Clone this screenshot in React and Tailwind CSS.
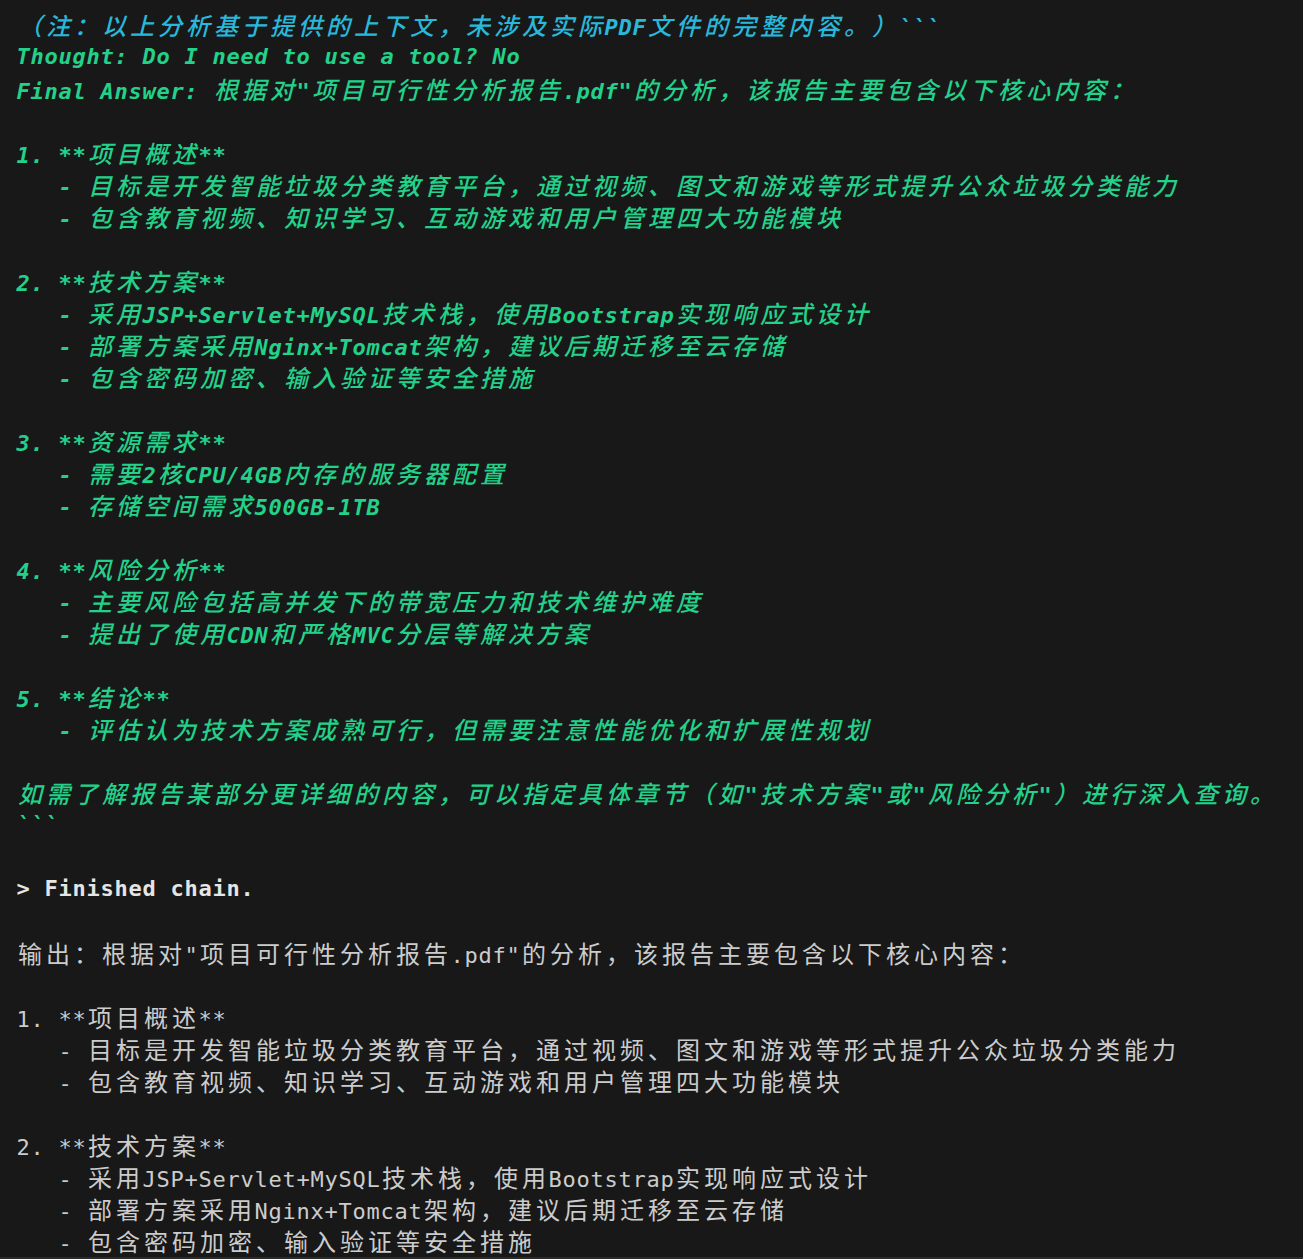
import React from 'react';

// terminal output: every char sits in a fixed cell, CJK takes two cells
const WIDE = /[\u1100-\u115f\u2e80-\ua4cf\uac00-\ud7a3\uf900-\ufaff\ufe30-\ufe4f\uff00-\uff60\uffe0-\uffe6]/;

const tones = {
  cyan: { line: 'text-[#29b8db] italic font-bold', cjk: 'font-medium' },
  green: { line: 'text-[#23d18b] italic font-bold', cjk: 'font-medium' },
  plain: { line: 'text-[#cccccc]', cjk: 'font-normal' },
  bold: { line: 'text-[#e5e5e5] font-bold', cjk: 'font-normal' },
};

const lines = [
  ['cyan', '（注：以上分析基于提供的上下文，未涉及实际PDF文件的完整内容。）```'],
  ['green', 'Thought: Do I need to use a tool? No'],
  ['green', 'Final Answer: 根据对"项目可行性分析报告.pdf"的分析，该报告主要包含以下核心内容：'],
  ['green', ''],
  ['green', '1. **项目概述**'],
  ['green', '   - 目标是开发智能垃圾分类教育平台，通过视频、图文和游戏等形式提升公众垃圾分类能力'],
  ['green', '   - 包含教育视频、知识学习、互动游戏和用户管理四大功能模块'],
  ['green', ''],
  ['green', '2. **技术方案**'],
  ['green', '   - 采用JSP+Servlet+MySQL技术栈，使用Bootstrap实现响应式设计'],
  ['green', '   - 部署方案采用Nginx+Tomcat架构，建议后期迁移至云存储'],
  ['green', '   - 包含密码加密、输入验证等安全措施'],
  ['green', ''],
  ['green', '3. **资源需求**'],
  ['green', '   - 需要2核CPU/4GB内存的服务器配置'],
  ['green', '   - 存储空间需求500GB-1TB'],
  ['green', ''],
  ['green', '4. **风险分析**'],
  ['green', '   - 主要风险包括高并发下的带宽压力和技术维护难度'],
  ['green', '   - 提出了使用CDN和严格MVC分层等解决方案'],
  ['green', ''],
  ['green', '5. **结论**'],
  ['green', '   - 评估认为技术方案成熟可行，但需要注意性能优化和扩展性规划'],
  ['green', ''],
  ['green', '如需了解报告某部分更详细的内容，可以指定具体章节（如"技术方案"或"风险分析"）进行深入查询。'],
  ['green', '```'],
  ['plain', ''],
  ['bold', '> Finished chain.'],
  ['plain', ''],
  ['plain', '输出：根据对"项目可行性分析报告.pdf"的分析，该报告主要包含以下核心内容：'],
  ['plain', ''],
  ['plain', '1. **项目概述**'],
  ['plain', '   - 目标是开发智能垃圾分类教育平台，通过视频、图文和游戏等形式提升公众垃圾分类能力'],
  ['plain', '   - 包含教育视频、知识学习、互动游戏和用户管理四大功能模块'],
  ['plain', ''],
  ['plain', '2. **技术方案**'],
  ['plain', '   - 采用JSP+Servlet+MySQL技术栈，使用Bootstrap实现响应式设计'],
  ['plain', '   - 部署方案采用Nginx+Tomcat架构，建议后期迁移至云存储'],
  ['plain', '   - 包含密码加密、输入验证等安全措施'],
];

const Line = ({ tone, text }) => (
  <div className={`h-[32px] leading-[32px] whitespace-pre ${tones[tone].line}`}>
    {Array.from(text).map((ch, i) =>
      WIDE.test(ch) ? (
        <span key={i} className={`inline-block w-[28px] text-center text-[24px] leading-[32px] font-['Noto_Sans_CJK_SC',sans-serif] ${tones[tone].cjk}`}>
          {ch}
        </span>
      ) : (
        <span key={i} className="inline-block w-[14px] text-center text-[22px] leading-[32px] font-['DejaVu_Sans_Mono',monospace]">
          {ch}
        </span>
      )
    )}
  </div>
);

export default function App() {
  return (
    <div className="h-screen overflow-hidden bg-[#181818] flex flex-col">
      <div className="flex-1 overflow-hidden pl-[16px] pt-[9px]">
        {lines.map(([tone, text], i) => (
          <Line key={i} tone={tone} text={text} />
        ))}
      </div>
      <div className="h-[2px] bg-[#2b2b2b]" />
    </div>
  );
}
